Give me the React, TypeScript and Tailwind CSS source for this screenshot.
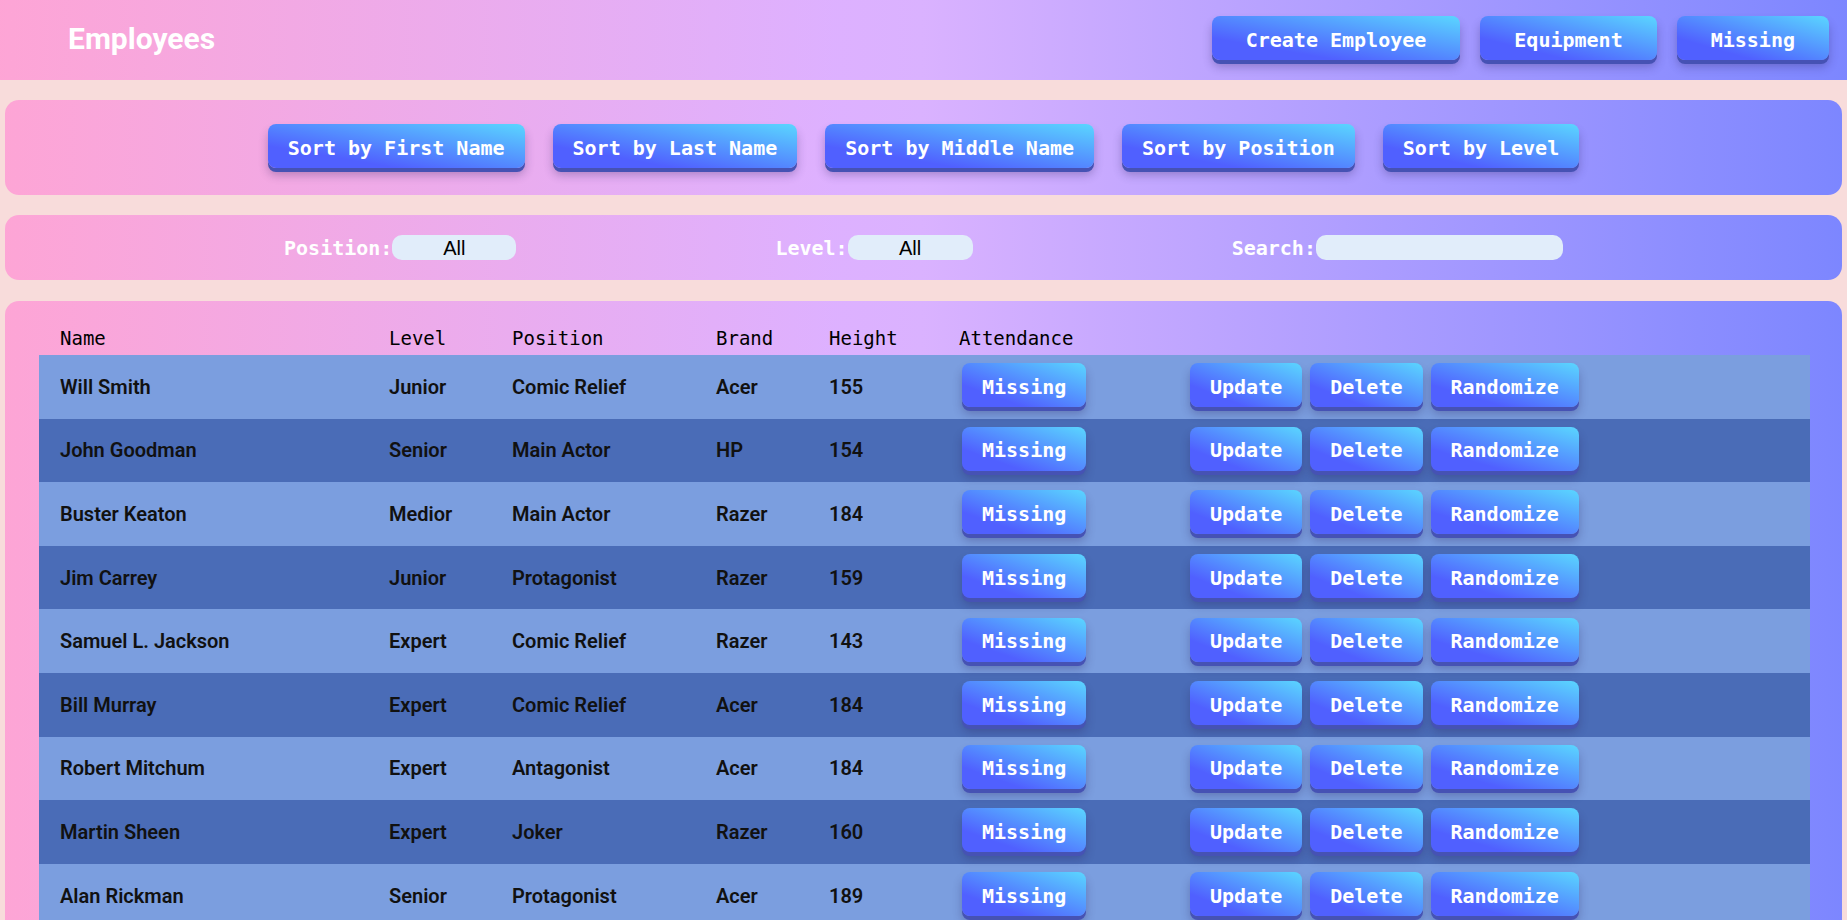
const employees = [
  ["Will Smith", "Junior", "Comic Relief", "Acer", "155"],
  ["John Goodman", "Senior", "Main Actor", "HP", "154"],
  ["Buster Keaton", "Medior", "Main Actor", "Razer", "184"],
  ["Jim Carrey", "Junior", "Protagonist", "Razer", "159"],
  ["Samuel L. Jackson", "Expert", "Comic Relief", "Razer", "143"],
  ["Bill Murray", "Expert", "Comic Relief", "Acer", "184"],
  ["Robert Mitchum", "Expert", "Antagonist", "Acer", "184"],
  ["Martin Sheen", "Expert", "Joker", "Razer", "160"],
  ["Alan Rickman", "Senior", "Protagonist", "Acer", "189"],
];

const Btn = ({ label, wide }: { label: string; wide?: boolean }) => (
  <button
    className={`h-[44px] pt-[3px] ${wide ? "px-[34px]" : "px-5"} rounded-[8px] bg-linear-to-tr/srgb from-[#5060ff] from-25% to-[#5ad6ff] text-white font-['DejaVu_Sans_Mono',monospace] font-bold text-[20px] leading-none whitespace-nowrap shadow-[0_4px_0_#4652b4,0_7px_10px_rgba(40,30,90,0.3)]`}
  >
    {label}
  </button>
);

const panel = "mx-[5px] rounded-[14px] bg-linear-to-r/srgb from-pink-300 via-purple-300 to-indigo-400";

export default function App() {
  return (
    <div className="h-[920px] overflow-hidden bg-[#f8dcdb]">
      <header className="h-[80px] flex items-start justify-between pl-[68px] pr-[18px] bg-linear-to-r/srgb from-pink-300 via-purple-300 to-indigo-400">
        <h1 className="mt-[21px] text-white text-[30px] font-bold font-['Roboto',sans-serif] leading-[36px]">
          Employees
        </h1>
        <div className="flex gap-[20px] pt-[16px]">
          <Btn label="Create Employee" wide />
          <Btn label="Equipment" wide />
          <Btn label="Missing" wide />
        </div>
      </header>

      <div className={`${panel} mt-[20px] h-[95px] pt-[24px] flex justify-center gap-[28px]`}>
        <Btn label="Sort by First Name" />
        <Btn label="Sort by Last Name" />
        <Btn label="Sort by Middle Name" />
        <Btn label="Sort by Position" />
        <Btn label="Sort by Level" />
      </div>

      <div className={`${panel} mt-[20px] h-[65px] flex items-center justify-center gap-[259px] font-['DejaVu_Sans_Mono',monospace] font-bold text-[20px] text-white`}>
        <label className="flex items-center">
          Position:
          <select className="appearance-none w-[124px] h-[25px] rounded-[10px] bg-[#e1edfa] text-black text-center font-['Liberation_Sans',sans-serif] font-normal text-[20px] leading-none">
            <option>All</option>
          </select>
        </label>
        <label className="flex items-center">
          Level:
          <select className="appearance-none w-[125px] h-[25px] rounded-[10px] bg-[#e1edfa] text-black text-center font-['Liberation_Sans',sans-serif] font-normal text-[20px] leading-none">
            <option>All</option>
          </select>
        </label>
        <label className="flex items-center">
          Search:
          <input className="w-[247px] h-[25px] rounded-[10px] bg-[#e1edfa] outline-none" />
        </label>
      </div>

      <div className={`${panel} mt-[21px] h-[700px] pt-[20px] pl-[34px] pr-[32px]`}>
        <table className="w-full table-fixed border-collapse">
          <colgroup>
            <col className="w-[329px]" />
            <col className="w-[123px]" />
            <col className="w-[204px]" />
            <col className="w-[113px]" />
            <col className="w-[130px]" />
            <col className="w-[228px]" />
            <col />
          </colgroup>
          <thead>
            <tr className="h-[34px] text-left font-['DejaVu_Sans_Mono',monospace] font-normal text-[19px] text-black">
              <th className="pl-[21px] font-normal">Name</th>
              <th className="pl-[21px] font-normal">Level</th>
              <th className="pl-[21px] font-normal">Position</th>
              <th className="pl-[21px] font-normal">Brand</th>
              <th className="pl-[21px] font-normal">Height</th>
              <th className="pl-[21px] font-normal">Attendance</th>
              <th></th>
            </tr>
          </thead>
          <tbody className="font-['Roboto',sans-serif] font-semibold text-[20px] text-[#111]">
            {employees.map((e, i) => (
              <tr key={i} className={`h-[63.6px] ${i % 2 === 0 ? "bg-[#7b9edf]" : "bg-[#4a6cb7]"}`}>
                {e.map((v, j) => (
                  <td key={j} className="pl-[21px] whitespace-nowrap">
                    {v}
                  </td>
                ))}
                <td className="pl-[24px] pb-[3px]">
                  <Btn label="Missing" />
                </td>
                <td className="pl-[24px] pb-[3px]">
                  <div className="flex gap-[8px]">
                    <Btn label="Update" />
                    <Btn label="Delete" />
                    <Btn label="Randomize" />
                  </div>
                </td>
              </tr>
            ))}
          </tbody>
        </table>
      </div>
    </div>
  );
}
